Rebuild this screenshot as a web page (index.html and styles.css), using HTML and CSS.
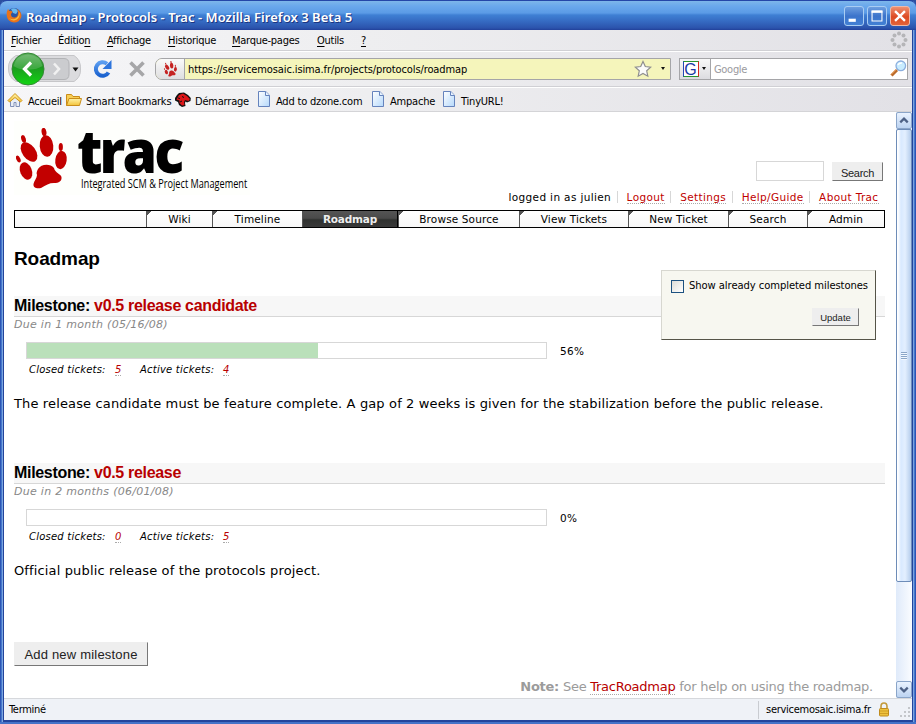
FILE: index.html
```html
<!DOCTYPE html>
<html lang="fr">
<head>
<meta charset="utf-8">
<title>Roadmap - Protocols - Trac</title>
<link rel="stylesheet" href="styles.css">
</head>
<body>
<svg width="0" height="0" class="defs">
  <defs>
    <linearGradient id="green" x1="0" y1="0" x2="0" y2="1"><stop offset="0" stop-color="#5fae5f"/><stop offset=".45" stop-color="#1c9a20"/><stop offset="1" stop-color="#12d612"/></linearGradient>
    <linearGradient id="gold" x1="0" y1="0" x2="0" y2="1"><stop offset="0" stop-color="#fff3a8"/><stop offset="1" stop-color="#f3c33a"/></linearGradient>
    <linearGradient id="sheet" x1="0" y1="0" x2="1" y2="1"><stop offset="0" stop-color="#fff"/><stop offset="1" stop-color="#b4d8fb"/></linearGradient>
    <linearGradient id="blue" x1="0" y1="0" x2="0" y2="1"><stop offset="0" stop-color="#5b9df0"/><stop offset="1" stop-color="#1c63cf"/></linearGradient>
    <symbol id="paw" viewBox="0 0 52 62">
      <ellipse cx="30.500" cy="18" rx="6.800" ry="10.800" transform="rotate(-5 30.500 18)"/>
      <ellipse cx="13" cy="24" rx="6.600" ry="11" transform="rotate(-36 13 24)"/>
      <ellipse cx="45" cy="32" rx="5.700" ry="9.200" transform="rotate(8 45 32)"/>
      <ellipse cx="10" cy="43" rx="5.800" ry="9" transform="rotate(-22 10 43)"/>
      <ellipse cx="28" cy="4" rx="2.400" ry="4.200" transform="rotate(-10 28 4)"/>
      <ellipse cx="7.500" cy="11" rx="2.200" ry="4" transform="rotate(-18 7.500 11)"/>
      <ellipse cx="44.800" cy="19" rx="2.100" ry="4"/>
      <ellipse cx="2.300" cy="31" rx="2" ry="3.600" transform="rotate(-25 2.300 31)"/>
      <path d="M22 41C25 36 34 35 38 40C39 45 45 46 45.500 49C46 53 43 55 38 55C33 55 30 57 25 60C21 61 17 60 17.500 56C18 53 21 50 21 47C20 45 21 43 22 41Z"/>
    </symbol>
    <symbol id="page" viewBox="0 0 14 17"><path d="M1.500.500H8.800L12.500 4.200V15.500H1.500Z" fill="url(#sheet)" stroke="#6583bd"/><path d="M8.500.500V4.500H12.500" fill="#e8f3ff" stroke="#6583bd"/></symbol>
  </defs>
</svg>
<div class="window">
  <div class="titlebar">
    <svg class="fox" viewBox="0 0 16 16"><circle cx="8" cy="8" r="7" fill="#2a55a5"/><path d="M5 2Q10 0 12 4L10 7L7 6Z" fill="#69b9ed"/><path d="M2 2L3.500 4Q5 3 6.500 5L5 7Q5 11 9 10.500Q12 10 12 6Q12 3 11 2Q16 5 15.300 10Q13.500 15.500 8 15.500Q1 15 .700 8Q.600 4 2 2Z" fill="#e8731c"/><path d="M13.500 5Q14.500 10 11 12.500Q6 15 3 11Q7 13.500 10.500 11Q13 9 13.500 5Z" fill="#fbc13c"/></svg>
    <span class="caption">Roadmap - Protocols - Trac - Mozilla Firefox 3 Beta 5</span>
    <div class="winbtns">
      <span class="wb"><svg viewBox="0 0 20 20"><path d="M4 13h8v3.500H4z" fill="#fff"/></svg></span>
      <span class="wb"><svg viewBox="0 0 20 20"><path d="M4.500 4.500h11v11h-11z" fill="none" stroke="#fff" stroke-width="1.200"/><path d="M4 4h12v2.500H4z" fill="#fff"/></svg></span>
      <span class="wb close"><svg viewBox="0 0 20 20"><path d="M4.500 4.500l11 11M15.500 4.500l-11 11" stroke="#fff" stroke-width="2.600"/></svg></span>
    </div>
  </div>
  <div class="chrome">
    <div class="menubar ui">
      <span class="m1"><u>F</u>ichier</span><span class="m2">Éditio<u>n</u></span><span class="m3"><u>A</u>ffichage</span><span class="m4"><u>H</u>istorique</span><span class="m5"><u>M</u>arque-pages</span><span class="m6"><u>O</u>utils</span><span><u>?</u></span>
      <svg class="throbber" viewBox="0 0 18 18" fill="#b5b5b8"><circle cx="9" cy="2.500" r="2"/><circle cx="13.500" cy="4.500" r="2"/><circle cx="15.500" cy="9" r="2"/><circle cx="13.500" cy="13.500" r="2"/><circle cx="9" cy="15.500" r="2"/><circle cx="4.500" cy="13.500" r="2"/><circle cx="2.500" cy="9" r="2"/><circle cx="4.500" cy="4.500" r="2"/></svg>
    </div>
    <div class="navbar ui">
      <svg class="backfwd" viewBox="0 0 74 34">
        <path d="M8 3.500H66Q73 8 72.500 17Q73 25 66 29.500H8Q0 25 .500 16Q0 8 8 3.500Z" fill="#dbdbde" stroke="#c6c6c9"/>
        <path d="M30 6.500H56Q61 6.500 61 12V22Q61 27.500 56 27.500H30Z" fill="#cbcccf" stroke="#b2b3b6"/>
        <path d="M46 11.500l5 5.500-5 5.500" fill="none" stroke="#f1f1f1" stroke-width="2.600"/>
        <path d="M64.500 15.500h6l-3 4z" fill="#111"/>
        <circle cx="20" cy="17" r="16" fill="url(#green)" stroke="#358836"/><path d="M5.500 14Q8 3 20 2.500Q32 3 34.500 14Q28 18 20 17.500Q11 18 5.500 14Z" fill="#fff" opacity=".16"/>
        <path d="M23 10.500L16.500 17l6.500 6.500" fill="none" stroke="#fff" stroke-width="3.200"/>
      </svg>
      <svg class="reload" viewBox="0 0 20 20"><path d="M15.500 13.500A6.800 6.800 0 1 1 14 4.800" fill="none" stroke="url(#blue)" stroke-width="4"/><path d="M18.500 1V10H9.500Z" fill="#2d74dc"/></svg>
      <svg class="stop" viewBox="0 0 18 18"><path d="M2.500 2.500l13 13M15.500 2.500l-13 13" stroke="#a6a6a8" stroke-width="3.600"/></svg>
      <div class="urlbar">
        <span class="ident"><svg viewBox="0 0 52 62" fill="#c52222"><use href="#paw"/></svg></span>
        <span class="url">https://servicemosaic.isima.fr/projects/protocols/roadmap</span>
        <svg class="star" viewBox="0 0 18 18"><path d="M9 1.500l2.300 5 5.400.600-4 3.700 1.100 5.400L9 13.500l-4.800 2.700 1.100-5.400-4-3.700 5.400-.600z" fill="#fbfbfb" stroke="#8e8e8e" stroke-width="1.200"/></svg>
        <i class="caret"></i>
      </div>
      <div class="searchbar">
        <span class="engine"><span class="g">G</span><i class="caret"></i></span>
        <span class="hint">Google</span>
        <svg class="glass" viewBox="0 0 17 17"><path d="M1.500 15.500L7 10" stroke="#bb6a2b" stroke-width="3"/><path d="M1 14.500L6 9.500" stroke="#f5b16d"/><circle cx="10.800" cy="5.800" r="4.800" fill="#c8ecff" stroke="#8baede" stroke-width="1.300"/><path d="M8 5Q9 2.500 12 3" fill="none" stroke="#fff" stroke-width="1.500"/></svg>
      </div>
    </div>
    <div class="bookmarks ui">
      <span class="k1"><svg class="i16" viewBox="0 0 16 16"><path d="M3.500 8v6.500h3.500v-4h2v4h3.500V8L8 4z" fill="#e9eef7" stroke="#8090b8"/><path d="M8 1.500L1 8.500 2.500 10 8 5.500 13.500 10 15 8.500z" fill="url(#gold)" stroke="#d0951b"/></svg>Accueil</span>
      <span class="k2"><svg class="i16" viewBox="0 0 16 16"><path d="M.500 13.500V2.500H5.500L7 4.500H13.500V7" fill="#f8cf56" stroke="#c98d1a"/><path d="M.500 13.500L3 6.500H15.500L13.500 13.500Z" fill="url(#gold)" stroke="#c98d1a"/></svg>Smart Bookmarks</span>
      <span class="k3"><svg class="i16" viewBox="0 0 16 16"><path d="M0 6L2 3 4 1 9 .500 13 3 15.800 6 15.500 9 12 10.500 10.500 9.500 10 11 10.500 14 7 15 4 13 3 10 0 8.500Z" fill="#111"/><path d="M4 3L8 1.500 12 4 15 7 13.500 9 10 8 9 10 9.500 13 7 13.500 4.500 11 4.500 8.500 1.500 7.500Z" fill="#dd1518"/><path d="M7 4.500l2 1M3 6l2 .5M5 10l2-1" stroke="#111"/></svg>Démarrage</span>
      <span class="k4"><svg class="i14" viewBox="0 0 14 17"><use href="#page"/></svg>Add to dzone.com</span>
      <span class="k5"><svg class="i14" viewBox="0 0 14 17"><use href="#page"/></svg>Ampache</span>
      <span class="k6"><svg class="i14" viewBox="0 0 14 17"><use href="#page"/></svg>TinyURL!</span>
    </div>
  </div>
  <div class="view">
    <div class="trac">
      <div class="header">
        <div class="logo">
          <svg class="paw" viewBox="0 0 52 62" fill="#c20000"><use href="#paw"/></svg>
          <div class="word"><b>trac</b><span>Integrated SCM &amp; Project Management</span></div>
        </div>
        <div class="hright">
          <form class="search"><span class="field"></span><span class="btn">Search</span></form>
          <div class="metanav"><span>logged in as julien</span><span><a>Logout</a></span><span><a>Settings</a></span><span><a>Help/Guide</a></span><span><a>About Trac</a></span></div>
        </div>
      </div>
      <div class="mainnav"><span class="t1">Wiki</span><span class="t2">Timeline</span><span class="t3 on">Roadmap</span><span class="t4">Browse Source</span><span class="t5">View Tickets</span><span class="t6">New Ticket</span><span class="t7">Search</span><span class="t8">Admin</span></div>
      <h1>Roadmap</h1>
      <div class="prefs"><div class="check"><i></i><span>Show already completed milestones</span></div><span class="btn">Update</span></div>
      <div class="milestone">
        <h2>Milestone: <em>v0.5 release candidate</em></h2>
        <p class="date">Due in 1 month (05/16/08)</p>
        <div class="prog"><div class="bar"><div class="done" style="width:56%"></div></div><span>56%</span></div>
        <div class="stats"><span class="cl">Closed tickets:</span><a>5</a><span class="act">Active tickets:</span><a>4</a></div>
        <p class="desc">The release candidate must be feature complete. A gap of 2 weeks is given for the stabilization before the public release.</p>
      </div>
      <div class="milestone">
        <h2>Milestone: <em>v0.5 release</em></h2>
        <p class="date">Due in 2 months (06/01/08)</p>
        <div class="prog"><div class="bar"></div><span>0%</span></div>
        <div class="stats"><span class="cl">Closed tickets:</span><a>0</a><span class="act">Active tickets:</span><a>5</a></div>
        <p class="desc">Official public release of the protocols project.</p>
      </div>
      <span class="btn add">Add new milestone</span>
      <p class="note"><b>Note:</b> See <a>TracRoadmap</a> for help on using the roadmap.</p>
    </div>
    <div class="scroll">
      <span class="sbtn"><svg viewBox="0 0 15 16"><path d="M3.500 10l4-4 4 4" fill="none" stroke="#4d6185" stroke-width="2.400"/></svg></span>
      <span class="thumb"><i></i></span>
      <span class="sbtn down"><svg viewBox="0 0 15 16"><path d="M3.500 6l4 4 4-4" fill="none" stroke="#4d6185" stroke-width="2.400"/></svg></span>
    </div>
  </div>
  <div class="status ui">
    <span class="done-text">Terminé</span>
    <span class="host">servicemosaic.isima.fr</span>
    <svg class="lock" viewBox="0 0 12 15"><path d="M3 7V4.500Q3 1 6 1T9 4.500V7" fill="none" stroke="#c29a3b" stroke-width="1.600"/><rect x="1.500" y="6.500" width="9" height="7.500" rx="1" fill="#edc23e" stroke="#c08b1c"/><path d="M2 9h8M2 11.500h8" stroke="#d19e25"/></svg>
    <svg class="grip" viewBox="0 0 12 12" fill="#c3c6ca"><path d="M8 0h2v2H8zM8 4h2v2H8zM4 4h2v2H4zM8 8h2v2H8zM4 8h2v2H4zM0 8h2v2H0z"/></svg>
  </div>
</div>
</body>
</html>
```
FILE: styles.css
```css
* { box-sizing: border-box; }
body { margin: 0; width: 916px; height: 724px; overflow: hidden; background: #2c4fa0; }
.defs { position: absolute; }
svg { display: block; flex: none; }
p, h1, h2 { margin: 0; }

.window { display: flex; flex-direction: column; width: 916px; height: 724px; padding: 0 4px 4px; border-radius: 7px 7px 0 0;
  background: linear-gradient(90deg, #2c55b4 0 1px, #4677cc 1px 2px, #7ba5de 2px 3px, #23449c 3px 4px, #23449c 4px 912px, #23449c 912px 913px, #7ba5de 913px 914px, #4677cc 914px 915px, #2c55b4 915px); box-shadow: inset 0 -2px #4472c8; }
.titlebar { display: flex; align-items: center; height: 30px; margin: 0 -4px; padding: 3px 6px 0; border-radius: 7px 7px 0 0; border-top: 1px solid #2446a8;
  background: linear-gradient(#7db6ea 0, #6aa8ec 5px, #5b9be6 12px, #3f80d4 14px, #3468c0 21px, #2b53ac 27px, #22409a 29px); }
.fox { width: 16px; height: 16px; margin-top: -4px; }
.caption { margin-left: 4px; color: #fff; font: 600 13px "Noto Sans", sans-serif; letter-spacing: .03px; text-shadow: 1px 1px #1c3581; white-space: nowrap; }
.winbtns { display: flex; gap: 3px; margin: -2px 0 0 auto; }
.wb { width: 20px; height: 20px; border: 1px solid #a9cdf3; border-radius: 3px; background: linear-gradient(#6e9fe0, #3c74cb 50%, #4280d4); }
.wb svg { width: 18px; height: 18px; }
.close { border-color: #edb9a8; background: linear-gradient(#ee9070, #dd4a22 55%, #e2633a); }

.ui { font: 11px "DejaVu Sans Condensed", "DejaVu Sans", sans-serif; color: #000; white-space: nowrap; }
.chrome { height: 82px; background: linear-gradient(90deg, #f6f6f8, #eeeef0 40%, #e2e1e6); }
.menubar { display: flex; align-items: center; height: 22px; padding: 0 4px 1px 7px; border-bottom: 1px solid #fff; box-shadow: inset 0 -1px #d0d0d4; letter-spacing: -.27px; }
.menubar u { text-underline-offset: 2px; }
.m1 { width: 47px; } .m2 { width: 49px; } .m3 { width: 61px; } .m4 { width: 64px; } .m5 { width: 85px; } .m6 { width: 44px; }
.throbber { width: 18px; height: 18px; margin-left: auto; }
.navbar { display: flex; align-items: center; height: 36px; padding: 0 4px 2px; border-bottom: 1px solid #fff; box-shadow: inset 0 -1px #d0d0d4; }
.backfwd { width: 74px; height: 34px; }
.reload { width: 20px; height: 20px; margin-left: 11px; }
.stop { width: 18px; height: 18px; margin-left: 15px; }
.urlbar { display: flex; align-items: center; width: 516px; height: 22px; margin-left: 9px; border: 1px solid #a5a5a8; border-radius: 7px 0 0 7px; background: #f5f5bb; overflow: hidden; }
.ident { display: flex; align-items: center; justify-content: center; width: 29px; height: 20px; border-right: 1px solid #a5a5a8; background: linear-gradient(#fafafa, #dedee0); }
.ident svg { width: 15px; height: 16px; }
.url { margin-left: 3px; padding-top: 2px; letter-spacing: -.11px; }
.star { width: 18px; height: 18px; margin-left: auto; }
.caret { border: 2.5px solid transparent; border-top: 3px solid #111; border-bottom: 0; }
.star + .caret { margin: 0 5px 0 9px; }
.searchbar { display: flex; align-items: center; width: 229px; height: 22px; margin-left: 8px; border: 1px solid #a5a5a8; background: #fff; }
.engine { display: flex; align-items: center; gap: 3px; width: 31px; height: 20px; padding-left: 3px; border-right: 1px solid #a5a5a8; background: linear-gradient(#f8f8f8, #dcdce0); }
.g { width: 16px; height: 16px; border: 1px solid #27952e; border-left-color: #2348b8; border-right-color: #d42a20; background: #fff; color: #1838a5; font: 16px/15px "Liberation Sans", sans-serif; text-align: center; text-indent: -1px; }
.hint { margin-left: 3px; padding-top: 2px; color: #9a9a9e; letter-spacing: -.3px; }
.glass { width: 17px; height: 17px; margin-left: auto; }
.bookmarks { display: flex; align-items: center; height: 24px; padding: 1px 0 0 3px; border-bottom: 1px solid #d4d4d7; letter-spacing: -.2px; line-height: 15px; }
.bookmarks span { display: flex; align-items: center; padding-top: 3px; }
.i16 { width: 16px; height: 16px; margin: -4px 5px 0 0; }
.i14 { width: 14px; height: 17px; margin: -4px 5px 0 0; }
.k1 { width: 59px; } .k2 { width: 109px; } .k3 { width: 82px; } .k4 { width: 114px; } .k5 { width: 71px; }
.k2 .i16, .k3 .i16 { margin-right: 4px; }

.view { display: flex; height: 586px; background: #fff; }
.trac { position: relative; width: 892px; padding: 0 11px 0 10px; font: 13px/16px "DejaVu Sans", sans-serif; color: #000; }
.trac a { color: #b80000; border-bottom: 1px dotted #aaa; }
.header { display: flex; justify-content: space-between; height: 98px; }
.logo { display: flex; width: 236px; height: 74px; margin-top: 9px; background: #fefffc; }
.logo .paw { width: 52px; height: 62px; margin: 7px 0 0 2px; }
.word { display: flex; flex-direction: column; align-items: flex-start; margin-left: 9px; white-space: nowrap; }
.word b { height: 57px; font: 800 61px/57px "Open Sans", sans-serif; letter-spacing: -3.3px; transform: scaleX(.91); transform-origin: 0 0; }
.word span { margin: -2px 0 0 4px; font: 12.5px/16px "Open Sans", sans-serif; transform: scaleX(.733); transform-origin: 0 0; }
.hright { display: flex; flex-direction: column; align-items: flex-end; }
.search { display: flex; gap: 8px; margin: 49px 2px 0 0; height: 21px; }
.field { width: 68px; height: 20px; border: 1px solid #d7d7d7; }
.btn { display: block; border: 1px solid #eee; border-right-color: #777; border-bottom-color: #777; background: #eee; color: #222; font-family: "Liberation Sans", sans-serif; text-align: center; white-space: nowrap; }
.search .btn { width: 51px; height: 19px; margin-top: 1px; font-size: 11px; line-height: 20px; letter-spacing: -.3px; }
.metanav { display: flex; margin: 9px 0 0; font-size: 10.5px; line-height: 13px; letter-spacing: .36px; white-space: nowrap; }
.metanav span { padding: 0 6.500px 0 9px; background: linear-gradient(#d7d7d7, #d7d7d7) right 0 top 0 / 1px 12px no-repeat; height: 14px; }
.metanav span:last-child { background: none; padding-right: 6.500px; }
.metanav a { display: block; height: 13px; color: #c00000; }
.mainnav { display: flex; justify-content: flex-end; height: 18px; border: 1px solid #000; background: linear-gradient(#fff, #f7f7f7); font-size: 10.5px; line-height: 17px; letter-spacing: .14px; text-align: center; }
.mainnav span { height: 16px; border-left: 1px solid #555; background: linear-gradient(135deg, #555 3px, transparent 3.500px); }
.mainnav .on { background: linear-gradient(#555, #4a4a4a 45%, #303230 55%, #393939); color: #eee; font-weight: bold; border-right: 1px solid #000; letter-spacing: -.2px; }
.t1 { width: 66px; } .t2 { width: 90px; } .t3 { width: 96px; } .t4 { width: 121px; } .t5 { width: 109px; } .t6 { width: 100px; } .t7 { width: 79px; } .t8 { width: 77px; }
h1 { height: 68px; padding-top: 20px; font: bold 19px/22px "Liberation Sans", sans-serif; letter-spacing: -.1px; }
.prefs { position: absolute; left: 657px; top: 158px; width: 215px; height: 70px; padding: 9px 16px 0 9px; border: 1px solid; border-color: #d7d7d0 #555448 #555448 #d7d7d0; background: #f7f7f0; font-size: 10px; letter-spacing: -.07px; }
.check { display: flex; align-items: center; height: 13px; white-space: nowrap; margin-bottom: 15px; }
.check span { padding-bottom: 2px; }
.check i { flex: none; width: 13px; height: 13px; margin-right: 5px; border: 1px solid #1c5180; background: linear-gradient(135deg, #dcdcd7, #fff); }
.prefs .btn { width: 47px; height: 18px; margin-left: auto; font-size: 9.500px; line-height: 18px; letter-spacing: 0; }
.milestone { height: 167px; }
h2 { height: 21px; border-bottom: 1px solid #d7d7d7; background: #f7f7f7; font: bold 16px/20px "Liberation Sans", sans-serif; letter-spacing: -.32px; }
h2 em { font-style: normal; color: #b80000; }
.date { height: 25px; font-size: 11px; line-height: 15px; letter-spacing: .28px; font-style: italic; color: #888; }
.prog { display: flex; align-items: center; height: 17px; margin-left: 12px; font-size: 10.5px; letter-spacing: .3px; }
.prog span { padding-top: 1px; line-height: 15px; }
.bar { width: 521px; height: 17px; margin-right: 13px; border: 1px solid #d7d7d7; }
.done { height: 15px; background: #bae0ba; }
.stats { display: flex; height: 17px; margin: 4px 0 0 15px; font-size: 10px; line-height: 13px; letter-spacing: .22px; font-style: italic; }
.stats a { height: 13px; width: 6px; line-height: 13px; }
.cl { width: 86px; }
.stats .act { width: 83px; margin-left: 19px; }
.desc { margin-top: 16px; letter-spacing: .14px; white-space: nowrap; }
.add { width: 134px; height: 24px; margin-top: 12px; font-size: 13px; line-height: 23px; letter-spacing: .2px; }
.note { margin: 13px 12px 0 0; color: #9b9b9b; text-align: right; white-space: nowrap; letter-spacing: -.26px; }

.scroll { display: flex; flex-direction: column; width: 16px; background: linear-gradient(90deg, #dfeafa, #fafcff); }
.sbtn { height: 17px; border: 1px solid #8aa5c9; border-radius: 2px; background: linear-gradient(#eaf3ff, #bcd3f1); }
.sbtn svg { width: 14px; height: 15px; }
.thumb { display: flex; align-items: center; justify-content: center; height: 453px; border: 1px solid #6d8cb8; border-radius: 2px; background: linear-gradient(90deg, #fff 0 1px, #d8e9ff 4px, #e3efff 8px, #b5cdec 14px); }
.thumb i { width: 6px; height: 8px; background: repeating-linear-gradient(#8ba6c8 0 1px, #f2f8ff 1px 2px); }
.down { margin-top: auto; }

.status { display: flex; align-items: center; height: 22px; padding: 0 0 0 5px; border-top: 1px solid #d6d8dc; background: #eff2f7; letter-spacing: -.3px; }
.host { display: flex; align-items: center; height: 18px; margin-left: auto; padding-left: 7px; border-left: 1px solid #c9ccd1; letter-spacing: -.27px; width: 120px; }
.lock { width: 12px; height: 15px; }
.grip { width: 12px; height: 12px; margin: 6px 0 0 10px; }
```
